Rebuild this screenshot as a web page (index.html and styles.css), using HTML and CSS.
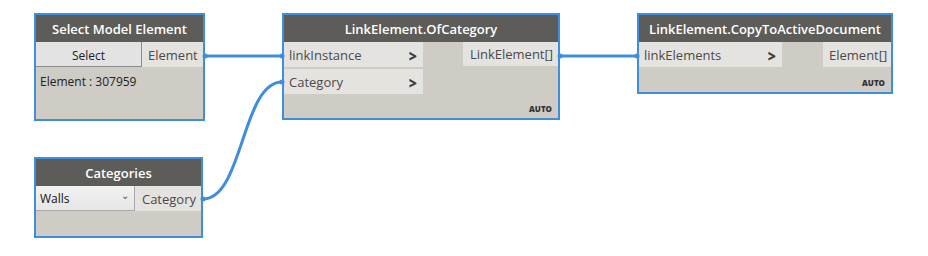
FILE: index.html
```html
<!DOCTYPE html>
<html lang="en">
<head>
    <meta charset="UTF-8">
    <title>Dynamo Graph</title>
    <link rel="stylesheet" href="styles.css">
</head>
<body>
    <div class="canvas">
        <svg class="wires" width="928" height="256" viewBox="0 0 928 256">
            <path d="M205 56 L282 56" />
            <path d="M560 56 L637 56" />
            <path d="M203 199 C243 199 242 82 282 82" />
            <circle cx="205" cy="56" r="2.5" />
            <circle cx="282" cy="56" r="2.5" />
            <circle cx="282" cy="82" r="2.5" />
            <circle cx="203" cy="199" r="2.5" />
            <circle cx="560" cy="56" r="2.5" />
            <circle cx="637" cy="56" r="2.5" />
        </svg>

        <!-- Select Model Element -->
        <div class="node node-select">
            <div class="node-title">Select Model Element</div>
            <div class="ports">
                <button class="select-btn">Select</button>
                <div class="port-out">Element</div>
            </div>
            <div class="node-info">Element : 307959</div>
        </div>

        <!-- LinkElement.OfCategory -->
        <div class="node node-ofcat">
            <div class="node-title">LinkElement.OfCategory</div>
            <div class="ports">
                <div class="inputs">
                    <div class="port-in"><span>linkInstance</span><span class="chev">&gt;</span></div>
                    <div class="port-in"><span>Category</span><span class="chev">&gt;</span></div>
                </div>
                <div class="port-out">LinkElement[]</div>
            </div>
            <div class="lacing">AUTO</div>
        </div>

        <!-- LinkElement.CopyToActiveDocument -->
        <div class="node node-copy">
            <div class="node-title">LinkElement.CopyToActiveDocument</div>
            <div class="ports">
                <div class="inputs">
                    <div class="port-in"><span>linkElements</span><span class="chev">&gt;</span></div>
                </div>
                <div class="port-out">Element[]</div>
            </div>
            <div class="lacing">AUTO</div>
        </div>

        <!-- Categories -->
        <div class="node node-cats">
            <div class="node-title">Categories</div>
            <div class="ports">
                <div class="dropdown"><span>Walls</span><span class="caret">&#8964;</span></div>
                <div class="port-out">Category</div>
            </div>
        </div>
    </div>
</body>
</html>
```

FILE: styles.css
```css
:root {
    --wire: #3f8ede;
    --header: #5e5c59;
    --body: #cfcbc5;
    --port: #e5e3e0;
}

* {
    box-sizing: border-box;
    margin: 0;
    padding: 0;
}

body {
    background: #fff;
    font-family: 'Open Sans', 'Segoe UI', sans-serif;
}

.canvas {
    position: relative;
    width: 928px;
    height: 256px;
    overflow: hidden;
}

.wires {
    position: absolute;
    left: 0;
    top: 0;
    z-index: 2;
    pointer-events: none;
}

.wires path {
    fill: none;
    stroke: var(--wire);
    stroke-width: 3;
}

.wires circle {
    fill: var(--wire);
}

.node {
    position: absolute;
    display: flex;
    flex-direction: column;
    border: 2px solid var(--wire);
    background: var(--body);
}

.node-select { left: 34px; top: 13px; width: 171px; height: 108px; }
.node-ofcat  { left: 282px; top: 13px; width: 278px; height: 107px; }
.node-copy   { left: 637px; top: 13px; width: 256px; height: 81px; }
.node-cats   { left: 34px; top: 157px; width: 169px; height: 81px; }

.node-title {
    height: 27px;
    padding-top: 1px;
    line-height: 27px;
    background: var(--header);
    color: #fff;
    font-size: 13px;
    font-weight: 600;
    text-align: center;
    white-space: nowrap;
}

.ports {
    display: flex;
    justify-content: space-between;
    align-items: flex-start;
}

.inputs {
    display: flex;
    flex-direction: column;
    gap: 2px;
}

.port-in {
    display: flex;
    justify-content: space-between;
    align-items: center;
    height: 25px;
    padding: 1px 6px 0 5px;
    background: var(--port);
    color: #4a4a4a;
    font-size: 13px;
}

.node-ofcat .port-in { width: 139px; }
.node-copy .port-in { width: 143px; }

.chev {
    color: #3c3c3c;
    font-weight: 800;
    font-size: 14px;
    transform: scaleY(1.1);
}

.port-out {
    height: 25px;
    line-height: 26px;
    padding: 0 5px 0 6px;
    background: var(--port);
    color: #4a4a4a;
    font-size: 13px;
    white-space: nowrap;
}

.node-select .port-out { width: 61px; }
.node-ofcat .port-out { width: 95px; height: 24px; line-height: 25px; text-align: right; }
.node-copy .port-out { width: 68px; text-align: right; }
.node-cats .port-out { width: 66px; text-align: right; }

.select-btn {
    width: 106px;
    height: 25px;
    padding-top: 2px;
    background: #e3e3e3;
    border: none;
    border-right: 1px solid #8c8c8c;
    border-bottom: 1px solid #8c8c8c;
    font-family: inherit;
    font-size: 12px;
    color: #222;
}

.node-info {
    padding: 6px 4px;
    font-size: 12px;
    color: #222;
}

.lacing {
    margin-top: auto;
    padding: 0 6px 4px 0;
    text-align: right;
    font-size: 8px;
    font-weight: 800;
    color: #333;
}

.dropdown {
    display: flex;
    justify-content: space-between;
    align-items: center;
    width: 99px;
    height: 25px;
    padding: 0 5px 0 4px;
    background: linear-gradient(#f2f2f2, #e6e6e6);
    border-bottom: 1px solid #a8a8a8;
    border-right: 1px solid #a8a8a8;
    font-size: 12px;
    color: #111;
}

.caret {
    font-size: 10px;
    color: #555;
    margin-top: -6px;
}
```
